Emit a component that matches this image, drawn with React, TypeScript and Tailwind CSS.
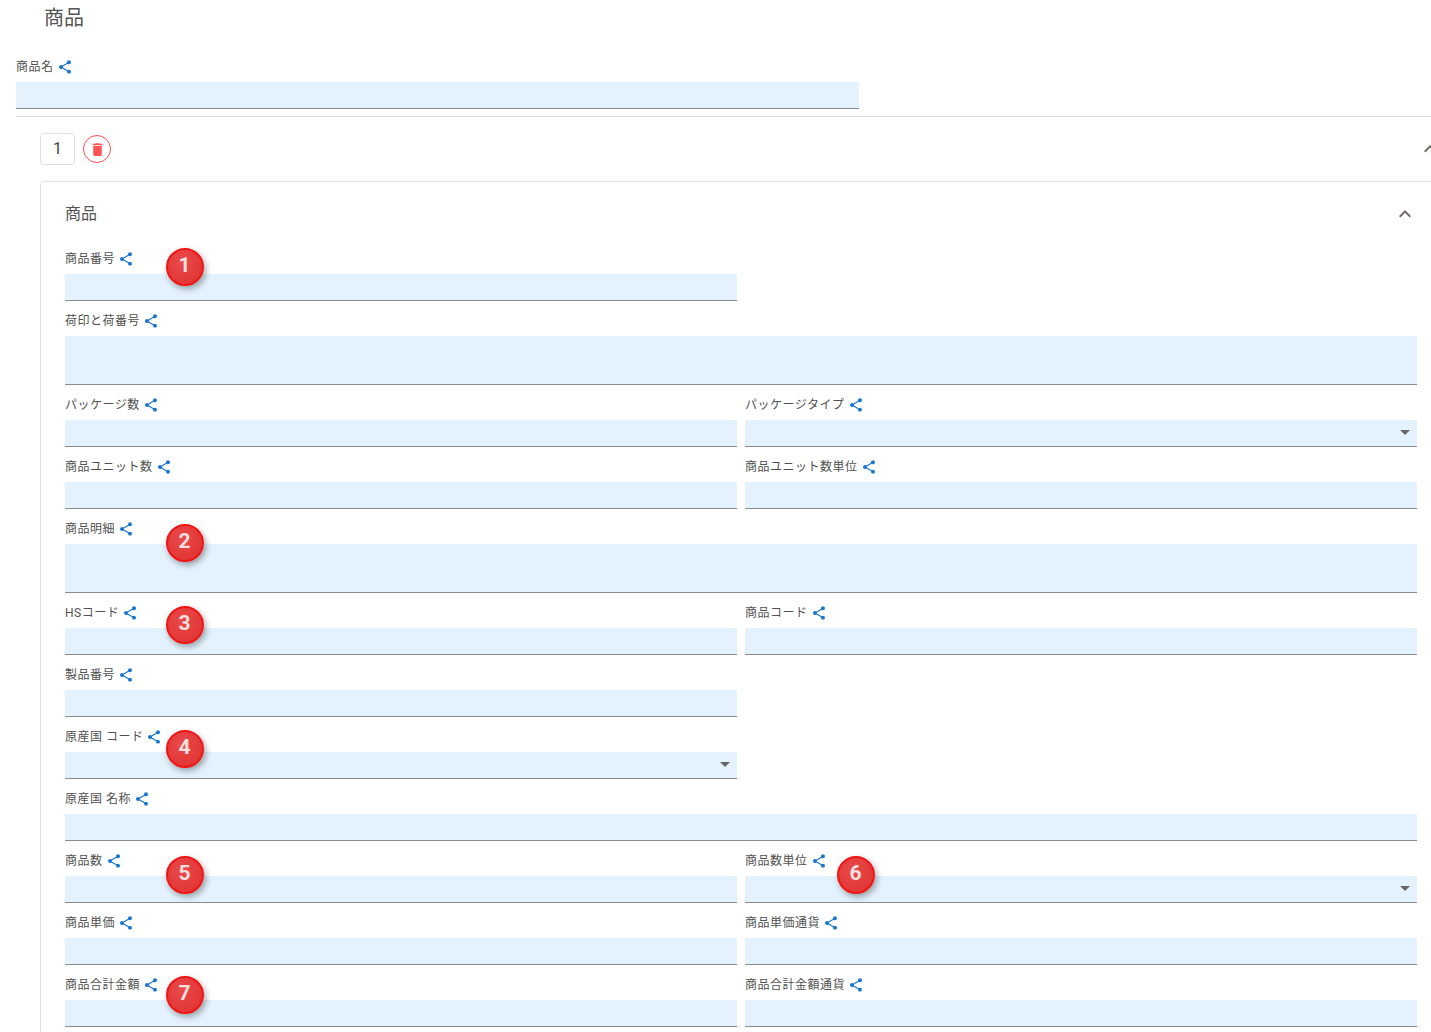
import React from "react";

function ShareIcon() {
  return (
    <svg viewBox="0 0 24 24" className="w-4 h-4 ml-[3px] shrink-0 fill-[#1976d2]">
      <path d="M18 16.08c-.76 0-1.44.3-1.96.77L8.91 12.7c.05-.23.09-.46.09-.7s-.04-.47-.09-.7l7.05-4.11c.54.5 1.25.81 2.04.81 1.66 0 3-1.34 3-3s-1.34-3-3-3-3 1.34-3 3c0 .24.04.47.09.7L8.04 9.81C7.5 9.31 6.79 9 6 9c-1.66 0-3 1.34-3 3s1.34 3 3 3c.79 0 1.5-.31 2.04-.81l7.12 4.16c-.05.21-.08.43-.08.65 0 1.61 1.31 2.92 2.92 2.92 1.61 0 2.92-1.31 2.92-2.92s-1.31-2.92-2.92-2.92z" />
    </svg>
  );
}

function Chevron() {
  return (
    <svg viewBox="0 0 24 24" className="w-6 h-6 fill-[#6f6a62]">
      <path d="M12 8l-6 6 1.41 1.41L12 10.83l4.59 4.58L18 14z" />
    </svg>
  );
}

function Field({
  label,
  tall = false,
  select = false,
  wide = false,
}: {
  label: string;
  tall?: boolean;
  select?: boolean;
  wide?: boolean;
}) {
  return (
    <div className={wide ? "col-span-2 mb-[9px]" : "mb-[9px]"}>
      <div className="flex items-center h-[22px] mb-1 text-xs tracking-[0.5px] text-[#505050]">
        <span>{label}</span>
        <ShareIcon />
      </div>
      <div
        className={
          tall
            ? "h-[49px] bg-[#e3f2fd] border-b border-[#8a8a8a]"
            : "h-[27px] bg-[#e3f2fd] border-b border-[#8a8a8a] flex items-center justify-end pr-[7px]"
        }
      >
        {select && <div className="w-0 h-0 mb-[2px] border-x-[5px] border-x-transparent border-t-[5px] border-t-[#666666]" />}
      </div>
    </div>
  );
}

const badges = [
  { n: 1, cls: "left-[166px] top-[248px]" },
  { n: 2, cls: "left-[166px] top-[524px]" },
  { n: 3, cls: "left-[166px] top-[606px]" },
  { n: 4, cls: "left-[166px] top-[730px]" },
  { n: 5, cls: "left-[166px] top-[856px]" },
  { n: 6, cls: "left-[837px] top-[856px]" },
  { n: 7, cls: "left-[166px] top-[976px]" },
];

export default function App() {
  return (
    <div
      className="relative h-[1032px] overflow-hidden bg-white"
      style={{ fontFamily: 'Roboto, "Noto Sans CJK JP", sans-serif' }}
    >
      <div className="w-[1442px] pl-4">
        <h1 className="h-[36px] pl-[28px] flex items-center text-xl text-[#555555]">商品</h1>
        <div className="w-[843px] pt-5">
          <div className="flex items-center h-[22px] mb-1 text-xs tracking-[0.5px] text-[#505050]">
            <span>商品名</span>
            <ShareIcon />
          </div>
          <div className="h-[27px] bg-[#e3f2fd] border-b border-[#8a8a8a]" />
        </div>
        <div className="mt-[7px] border-t border-[#e0e0e0] pl-6">
          <div className="flex items-center mt-4 mb-4 h-8">
            <div className="w-[35px] h-8 flex items-center justify-center border border-[#e0e0e0] rounded text-base text-[#444444]">
              1
            </div>
            <button className="ml-2 w-7 h-7 rounded-full border border-[#ff5252] flex items-center justify-center">
              <svg viewBox="0 0 24 24" className="w-[17px] h-[17px] fill-[#ff5252]">
                <path d="M6 19c0 1.1.9 2 2 2h8c1.1 0 2-.9 2-2V7H6v12zM19 4h-3.5l-1-1h-5l-1 1H5v2h14V4z" />
              </svg>
            </button>
            <div className="ml-auto">
              <Chevron />
            </div>
          </div>
          <div className="border border-[#e0e0e0] rounded px-6">
            <div className="h-[64px] mb-[2px] flex items-center justify-between text-base text-[#555555]">
              <span>商品</span>
              <Chevron />
            </div>
            <div className="grid grid-cols-2 gap-x-2">
              <Field label="商品番号" />
              <div />
              <Field label="荷印と荷番号" tall wide />
              <Field label="パッケージ数" />
              <Field label="パッケージタイプ" select />
              <Field label="商品ユニット数" />
              <Field label="商品ユニット数単位" />
              <Field label="商品明細" tall wide />
              <Field label="HSコード" />
              <Field label="商品コード" />
              <Field label="製品番号" />
              <div />
              <Field label="原産国 コード" select />
              <div />
              <Field label="原産国 名称" wide />
              <Field label="商品数" />
              <Field label="商品数単位" select />
              <Field label="商品単価" />
              <Field label="商品単価通貨" />
              <Field label="商品合計金額" />
              <Field label="商品合計金額通貨" />
            </div>
          </div>
        </div>
      </div>
      {badges.map((b) => (
        <div
          key={b.n}
          className={`absolute ${b.cls} w-[38px] h-[38px] pb-[3px] pr-[1px] rounded-full bg-[radial-gradient(circle_at_40%_35%,#e84a4a,#e02f2f)] border-2 border-[#f01414] flex items-center justify-center text-[21px] font-bold text-[#fbdede] shadow-[2px_3px_6px_rgba(0,0,0,0.35)]`}
        >
          {b.n}
        </div>
      ))}
    </div>
  );
}
